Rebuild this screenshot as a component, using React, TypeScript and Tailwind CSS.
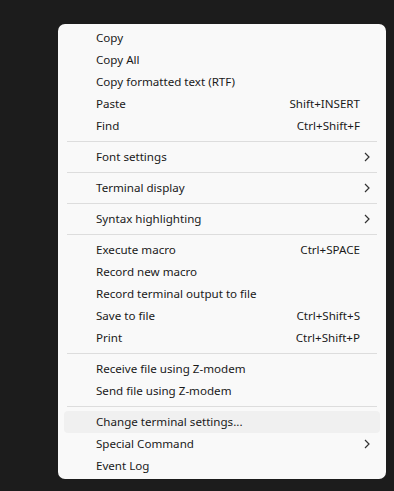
import React from "react";

type Item =
  | { type: "item"; label: string; shortcut?: string; sub?: boolean; hover?: boolean }
  | { type: "sep" };

const items: Item[] = [
  { type: "item", label: "Copy" },
  { type: "item", label: "Copy All" },
  { type: "item", label: "Copy formatted text (RTF)" },
  { type: "item", label: "Paste", shortcut: "Shift+INSERT" },
  { type: "item", label: "Find", shortcut: "Ctrl+Shift+F" },
  { type: "sep" },
  { type: "item", label: "Font settings", sub: true },
  { type: "sep" },
  { type: "item", label: "Terminal display", sub: true },
  { type: "sep" },
  { type: "item", label: "Syntax highlighting", sub: true },
  { type: "sep" },
  { type: "item", label: "Execute macro", shortcut: "Ctrl+SPACE" },
  { type: "item", label: "Record new macro" },
  { type: "item", label: "Record terminal output to file" },
  { type: "item", label: "Save to file", shortcut: "Ctrl+Shift+S" },
  { type: "item", label: "Print", shortcut: "Ctrl+Shift+P" },
  { type: "sep" },
  { type: "item", label: "Receive file using Z-modem" },
  { type: "item", label: "Send file using Z-modem" },
  { type: "sep" },
  { type: "item", label: "Change terminal settings...", hover: true },
  { type: "item", label: "Special Command", sub: true },
  { type: "item", label: "Event Log" },
];

function Chevron() {
  return (
    <svg width="6" height="10" viewBox="0 0 6 10" className="block">
      <path d="M1 1 L5 5 L1 9" fill="none" stroke="#333" strokeWidth="1.2" />
    </svg>
  );
}

export default function App() {
  return (
    <div
      className="w-[394px] h-[491px] bg-[#1c1c1c] pt-[24px] pl-[58px]"
      style={{ fontFamily: '"Noto Sans", "Open Sans", sans-serif' }}
    >
      <div className="w-[328px] h-[455px] bg-[#f9f9f9] rounded-[7px] pt-[3px] pb-[2px] flex flex-col">
        {items.map((it, i) =>
          it.type === "sep" ? (
            <div key={i} className="h-[9px] flex flex-col justify-start pt-[4px] px-[9px]">
              <div className="h-px bg-[#dddddd]" />
            </div>
          ) : (
            <div
              key={i}
              className={`h-[22px] mx-[6px] rounded-[4px] flex items-center pl-[32px] pr-[10px] text-[11.6px] text-[#1a1a1a] ${
                it.hover ? "bg-[#f0f0f0]" : ""
              }`}
            >
              <span className="flex-1">{it.label}</span>
              {it.shortcut && <span className="mr-[10px]">{it.shortcut}</span>}
              {it.sub && (
                <span>
                  <Chevron />
                </span>
              )}
            </div>
          )
        )}
      </div>
    </div>
  );
}
